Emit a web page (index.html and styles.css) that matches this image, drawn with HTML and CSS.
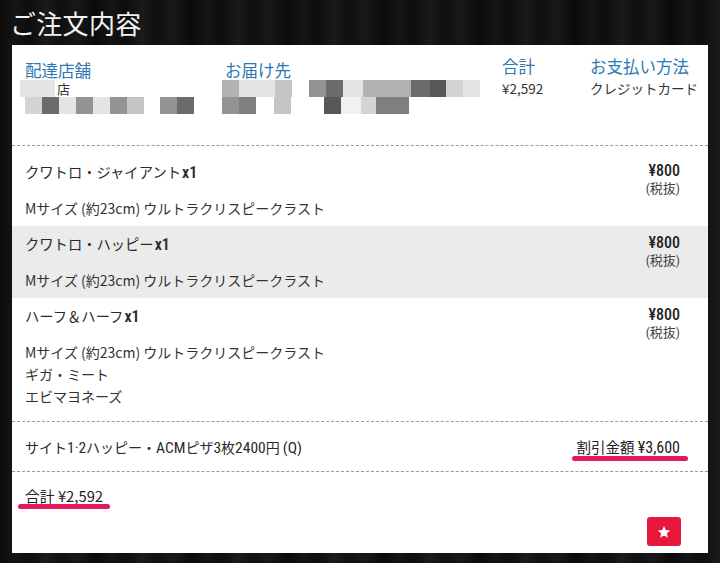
FILE: index.html
```html
<!DOCTYPE html>
<html lang="ja">
<head>
<meta charset="utf-8">
<title>ご注文内容</title>
<link rel="stylesheet" href="styles.css">
</head>
<body>
<div class="page">
  <h1 class="title">ご注文内容</h1>
  <div class="panel">
    <div class="summary">
      <div class="col col-shop">
        <div class="label">配達店舗</div>
        <div class="blur-row shift5"><span class="px w35 s1"></span><span class="store-suffix">店</span></div>
        <div class="blur-row"><span class="px s2"></span><span class="px s7"></span><span class="px s1"></span><span class="px s5"></span><span class="px s1"></span><span class="px s5"></span><span class="px s3"></span><span class="px gap16"></span><span class="px s5"></span><span class="px s7"></span></div>
      </div>
      <div class="col col-addr">
        <div class="label">お届け先</div>
        <div class="blur-row shift3"><span class="px s4"></span><span class="px w19 s1"></span><span class="px s1"></span><span class="px s3"></span><span class="px gap17"></span><span class="px s5"></span><span class="px s7"></span><span class="px w20 s1"></span><span class="px s4"></span><span class="px w15 s4"></span><span class="px w16 s4"></span><span class="px w19 s7"></span><span class="px w16 s8"></span><span class="px s2"></span><span class="px s1"></span></div>
        <div class="blur-row shift3"><span class="px s5"></span><span class="px s6"></span><span class="px gap18"></span><span class="px s3"></span><span class="px gap33"></span><span class="px s8"></span><span class="px w20 s0"></span><span class="px w15 s2"></span><span class="px s6"></span><span class="px w16 s6"></span></div>
      </div>
      <div class="col col-total">
        <div class="label">合計</div>
        <div class="value">¥2,592</div>
      </div>
      <div class="col col-pay">
        <div class="label">お支払い方法</div>
        <div class="value">クレジットカード</div>
      </div>
    </div>

    <div class="items">
      <div class="item">
        <div class="item-main">
          <div class="item-name">クワトロ・ジャイアント<span class="cond">x1</span></div>
          <div class="item-desc">Mサイズ (約23cm) ウルトラクリスピークラスト</div>
        </div>
        <div class="item-price">
          <div class="price cond">¥800</div>
          <div class="tax"><span class="cond">(</span>税抜<span class="cond">)</span></div>
        </div>
      </div>
      <div class="item item-alt">
        <div class="item-main">
          <div class="item-name">クワトロ・ハッピー<span class="cond">x1</span></div>
          <div class="item-desc">Mサイズ (約23cm) ウルトラクリスピークラスト</div>
        </div>
        <div class="item-price">
          <div class="price cond">¥800</div>
          <div class="tax"><span class="cond">(</span>税抜<span class="cond">)</span></div>
        </div>
      </div>
      <div class="item">
        <div class="item-main">
          <div class="item-name">ハーフ＆ハーフ<span class="cond">x1</span></div>
          <div class="item-desc">Mサイズ (約23cm) ウルトラクリスピークラスト<br>ギガ・ミート<br>エビマヨネーズ</div>
        </div>
        <div class="item-price">
          <div class="price cond">¥800</div>
          <div class="tax"><span class="cond">(</span>税抜<span class="cond">)</span></div>
        </div>
      </div>
    </div>

    <div class="coupon">
      <div class="coupon-name">サイト<span class="cond">1·2</span>ハッピー・<span class="cond">ACM</span>ピザ<span class="cond">3</span>枚<span class="cond">2400</span>円 <span class="cond">(Q)</span></div>
      <div class="discount marked">割引金額 <span class="cond">¥3,600</span></div>
    </div>

    <div class="grand">
      <div class="grand-total marked">合計 ¥2,592</div>
      <div class="actions">
        <button class="fav" type="button" aria-label="お気に入り">
          <svg width="14" height="14" viewBox="0 0 24 24"><path d="M12 1.8l3.1 6.9 7.4.7-5.6 5 1.7 7.4L12 17.9l-6.6 3.9 1.7-7.4-5.6-5 7.4-.7z" fill="#fff"/></svg>
        </button>
      </div>
    </div>
  </div>
</div>
</body>
</html>
```

FILE: styles.css
```css
* { box-sizing: border-box; }

html, body {
  margin: 0;
  padding: 0;
}

body {
  width: 720px;
  height: 563px;
  overflow: hidden;
  font-family: "Noto Sans CJK JP", "Noto Sans", sans-serif;
  color: #333;
  background-color: #0d0d0d;
  background-image: repeating-linear-gradient(90deg,
    #0a0a0a 0px, #151515 14px, #0d0d0d 30px, #1b1b1b 46px,
    #101010 60px, #181818 78px, #0a0a0a 96px);
}

.page {
  padding: 0 12px;
}

.title {
  margin: 0 0 0 -2px;
  padding: 8px 0 7px;
  height: 45px;
  font-size: 26px;
  line-height: 30px;
  font-weight: 400;
  color: #f2f2f2;
  letter-spacing: 0.3px;
}

.panel {
  background: #fff;
  height: 508px;
}

.cond {
  font-family: "Noto Sans ExtraCondensed", "Noto Sans Condensed", "Roboto Condensed", "Noto Sans", "Noto Sans CJK JP", sans-serif;
  font-stretch: 62.5%;
}

/* summary */
.summary {
  display: grid;
  grid-template-columns: 200px 277px 88px 1fr;
  height: 101px;
  padding-left: 13px;
  border-bottom: 1px dashed #9a9a9a;
}

.label {
  font-size: 16.5px;
  line-height: 20px;
  color: #2a78b2;
  white-space: nowrap;
}

.col-shop, .col-addr { padding-top: 15px; }
.col-total, .col-pay { padding-top: 11px; }

.value {
  margin-top: 2px;
  font-size: 13.5px;
  line-height: 20px;
  color: #333;
  white-space: nowrap;
}

.blur-row {
  display: flex;
  align-items: flex-start;
  height: 17px;
}
.shift5 { margin-left: -5px; }
.shift3 { margin-left: -3px; }

.px { width: 17px; height: 17px; flex: none; }
.w15 { width: 15px; }
.w16 { width: 16px; }
.w19 { width: 19px; }
.w20 { width: 20px; }
.w35 { width: 35px; }
.gap16 { width: 16px; }
.gap17 { width: 17px; }
.gap18 { width: 18px; }
.gap33 { width: 33px; }
.s0 { background: #f1f1f1; }
.s1 { background: #e4e4e4; }
.s2 { background: #d4d4d4; }
.s3 { background: #c5c5c5; }
.s4 { background: #b2b2b2; }
.s5 { background: #939393; }
.s6 { background: #7f7f7f; }
.s7 { background: #6b6b6b; }
.s8 { background: #585858; }

.store-suffix {
  margin-left: 2px;
  font-size: 13px;
  line-height: 17px;
  color: #333;
}

/* items */
.items {
  padding: 8px 0 7px;
  border-bottom: 1px dashed #9a9a9a;
}

.item {
  display: flex;
  justify-content: space-between;
  padding: 8px 28px 7px 13px;
}

.item-alt { background: #ebebeb; }

.item-name {
  font-size: 14.3px;
  line-height: 20px;
  margin-bottom: 14px;
  white-space: nowrap;
  color: #2a2a2a;
}

.item-name .cond {
  font-size: 16px;
  font-weight: 600;
  margin-left: 1px;
}

.item-desc {
  font-size: 14px;
  line-height: 22px;
  white-space: nowrap;
}

.item-price {
  text-align: right;
  margin-top: -1px;
}

.price {
  font-size: 16px;
  line-height: 19px;
  font-weight: 500;
  color: #222;
}

.tax {
  font-size: 13px;
  line-height: 16px;
  color: #444;
}

/* coupon */
.coupon {
  display: flex;
  justify-content: space-between;
  align-items: center;
  padding: 15px 28px 14px 13px;
  height: 50px;
  border-bottom: 1px dashed #9a9a9a;
}

.coupon-name {
  font-size: 14px;
  line-height: 20px;
  white-space: nowrap;
  color: #2a2a2a;
}

.coupon-name .cond { font-size: 15.5px; font-weight: 400; }

.discount {
  font-size: 14.5px;
  line-height: 20px;
  color: #222;
  white-space: nowrap;
}

.discount .cond { font-size: 16px; font-weight: 400; }

.marked {
  position: relative;
}

.marked::after {
  content: "";
  position: absolute;
  height: 5px;
  border-radius: 3px;
  background: #e5185d;
}

.discount.marked::after {
  left: -5px;
  right: -8px;
  bottom: -3px;
}

/* grand total */
.grand {
  padding: 11px 27px 14px 13px;
}

.grand-total {
  display: inline-block;
  font-size: 14.8px;
  line-height: 20px;
  color: #222;
}

.grand-total.marked::after {
  left: -7px;
  right: -7px;
  bottom: -3px;
}

.actions {
  display: flex;
  justify-content: flex-end;
  margin-top: 10px;
}

.fav {
  width: 34px;
  height: 29px;
  border: 0;
  border-radius: 3px;
  background: #e8173c;
  padding: 0;
  display: flex;
  align-items: center;
  justify-content: center;
}
```
